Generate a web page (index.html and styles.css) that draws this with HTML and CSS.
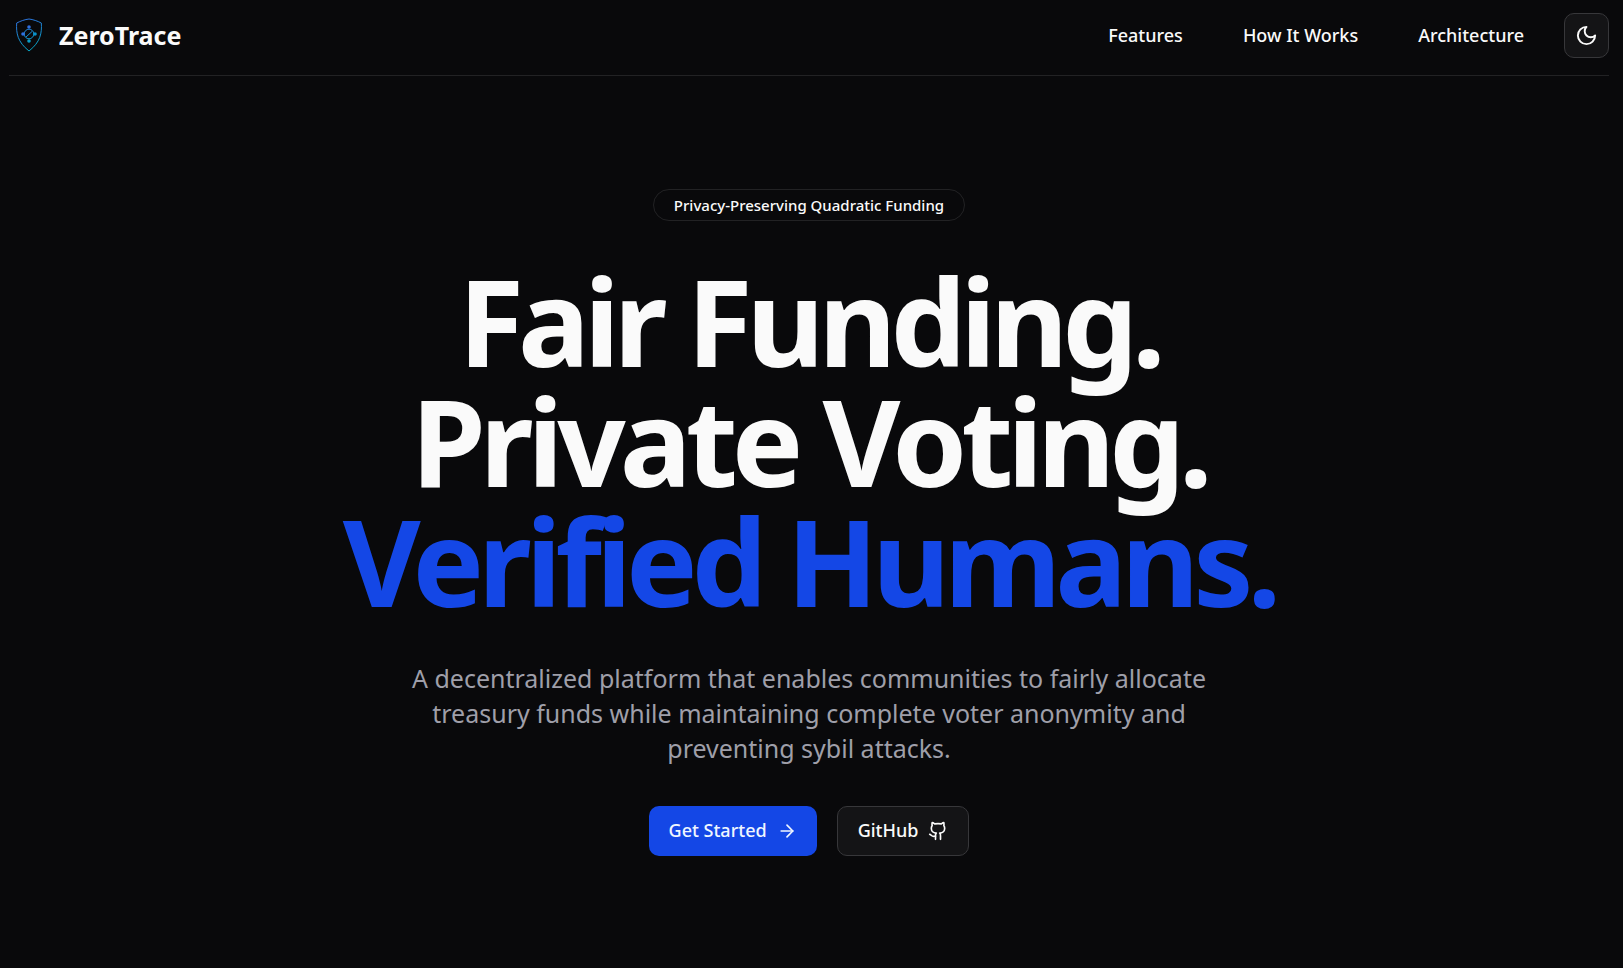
FILE: index.html
```html
<!DOCTYPE html>
<html lang="en">
<head>
<meta charset="UTF-8">
<meta name="viewport" content="width=device-width, initial-scale=1.0">
<title>ZeroTrace</title>
<link rel="stylesheet" href="styles.css">
</head>
<body>

<header class="header">
    <a class="brand" href="#">
        <svg class="brand-logo" viewBox="0 1 40 40" fill="none" aria-hidden="true">
            <defs>
                <linearGradient id="logoGradient" x1="8" y1="4" x2="20" y2="36" gradientUnits="userSpaceOnUse">
                    <stop offset="0" stop-color="#2f6fe0"/>
                    <stop offset="1" stop-color="#06a6c4"/>
                </linearGradient>
            </defs>
            <path d="M20 4 C16 4.500 11.500 6 7.700 8 C7 18 8.500 27 20 36 C31.500 27 33 18 32.300 8 C28.500 6 24 4.500 20 4 Z" stroke="url(#logoGradient)" stroke-width="1"/>
            <circle cx="20" cy="19" r="4.800" stroke="url(#logoGradient)" stroke-width="1"/>
            <path d="M17 22 L23 16.500" stroke="url(#logoGradient)" stroke-width="1"/>
            <circle cx="20" cy="12" r="1.800" fill="#2f6fe0"/>
            <circle cx="14" cy="19" r="1.800" fill="#2f6fe0"/>
            <circle cx="26" cy="19" r="1.800" fill="#0891c9"/>
            <circle cx="20" cy="26" r="1.800" fill="#0a9cc4"/>
        </svg>
        <span>ZeroTrace</span>
    </a>
    <nav class="nav">
        <a href="#features">Features</a>
        <a href="#how-it-works">How It Works</a>
        <a href="#architecture">Architecture</a>
        <button class="theme-toggle" type="button" aria-label="Toggle theme">
            <svg class="icon-moon" viewBox="0 0 24 24" aria-hidden="true">
                <path d="M12 3a6 6 0 0 0 9 9 9 9 0 1 1-9-9Z"/>
            </svg>
        </button>
    </nav>
</header>

<main class="hero">
    <span class="badge">Privacy-Preserving Quadratic Funding</span>
    <h1 class="title">
        Fair Funding.<br>
        Private Voting.<br>
        <span class="highlight">Verified Humans.</span>
    </h1>
    <p class="subtitle">A decentralized platform that enables communities to fairly allocate treasury funds while maintaining complete voter anonymity and preventing sybil attacks.</p>
    <div class="actions">
        <a class="btn btn-primary" href="#get-started">
            Get Started
            <svg class="icon" viewBox="0 0 24 24" aria-hidden="true">
                <path d="M5 12h14"/>
                <path d="m12 5 7 7-7 7"/>
            </svg>
        </a>
        <a class="btn btn-outline" href="#github">
            GitHub
            <svg class="icon" viewBox="0 0 24 24" aria-hidden="true">
                <path d="M15 22v-4a4.800 4.800 0 0 0-1-3.500c3 0 6-2 6-5.500.08-1.250-.27-2.480-1-3.500.28-1.150.28-2.350 0-3.500 0 0-1 0-3 1.500-2.640-.5-5.360-.5-8 0C6 2 5 2 5 2c-.3 1.150-.3 2.350 0 3.500A5.403 5.403 0 0 0 4 9c0 3.500 3 5.500 6 5.500-.39.49-.68 1.050-.85 1.650-.17.6-.22 1.230-.15 1.850v4"/>
                <path d="M9 18c-4.510 2-5-2-7-2"/>
            </svg>
        </a>
    </div>
</main>

</body>
</html>
```

FILE: styles.css
```css
* {
    box-sizing: border-box;
}
body {
    margin: 0;
    padding-right: 5px;
    min-height: 100vh;
    display: flex;
    flex-direction: column;
    background-color: #09090b;
    color: #fafafa;
    font-family: "Noto Sans", sans-serif;
}
a {
    color: inherit;
    text-decoration: none;
}

/* header */
.header {
    width: 100%;
    max-width: 1600px;
    margin: 0 auto;
    padding: 13px 0 17px;
    display: flex;
    align-items: center;
    justify-content: space-between;
    border-bottom: 1px solid #222224;
}
.brand {
    display: flex;
    align-items: center;
    gap: 10px;
    font-size: 25px;
    line-height: 35px;
    font-weight: 700;
}
.brand-logo {
    width: 40px;
    height: 40px;
}
.nav {
    display: flex;
    align-items: center;
    gap: 20px;
}
.nav a {
    padding: 0 20px;
    font-size: 18px;
    line-height: 25px;
    font-weight: 500;
}
.theme-toggle {
    width: 45px;
    height: 45px;
    padding: 0;
    display: flex;
    align-items: center;
    justify-content: center;
    background-color: #141416;
    color: #fafafa;
    border: 1px solid #37373a;
    border-radius: 10px;
    cursor: pointer;
}
.icon,
.icon-moon {
    width: 20px;
    height: 20px;
    fill: none;
    stroke: currentColor;
    stroke-width: 2;
    stroke-linecap: round;
    stroke-linejoin: round;
}
.icon-moon {
    width: 23px;
    height: 23px;
}

/* hero */
.hero {
    flex: 1;
    display: flex;
    flex-direction: column;
    align-items: center;
    justify-content: center;
    gap: 40px;
    text-align: center;
}
.badge {
    padding: 5px 20px;
    border: 1px solid #222224;
    border-radius: 16px;
    font-size: 15px;
    line-height: 20px;
    font-weight: 500;
}
.title {
    margin: 0;
    font-size: 120px;
    line-height: 120px;
    font-weight: 700;
    letter-spacing: -0.05em;
}
.highlight {
    color: #1447e6;
}
.subtitle {
    margin: 0;
    max-width: 840px;
    color: #9f9fa9;
    font-size: 25px;
    line-height: 35px;
}
.actions {
    display: flex;
    gap: 20px;
}
.btn {
    height: 50px;
    padding: 0 20px;
    display: flex;
    align-items: center;
    gap: 10px;
    border-radius: 10px;
    font-size: 18px;
    line-height: 25px;
    font-weight: 500;
}
.btn-primary {
    background-color: #1447e6;
    color: #eff6ff;
}
.btn-outline {
    background-color: #141416;
    border: 1px solid #37373a;
}
```
